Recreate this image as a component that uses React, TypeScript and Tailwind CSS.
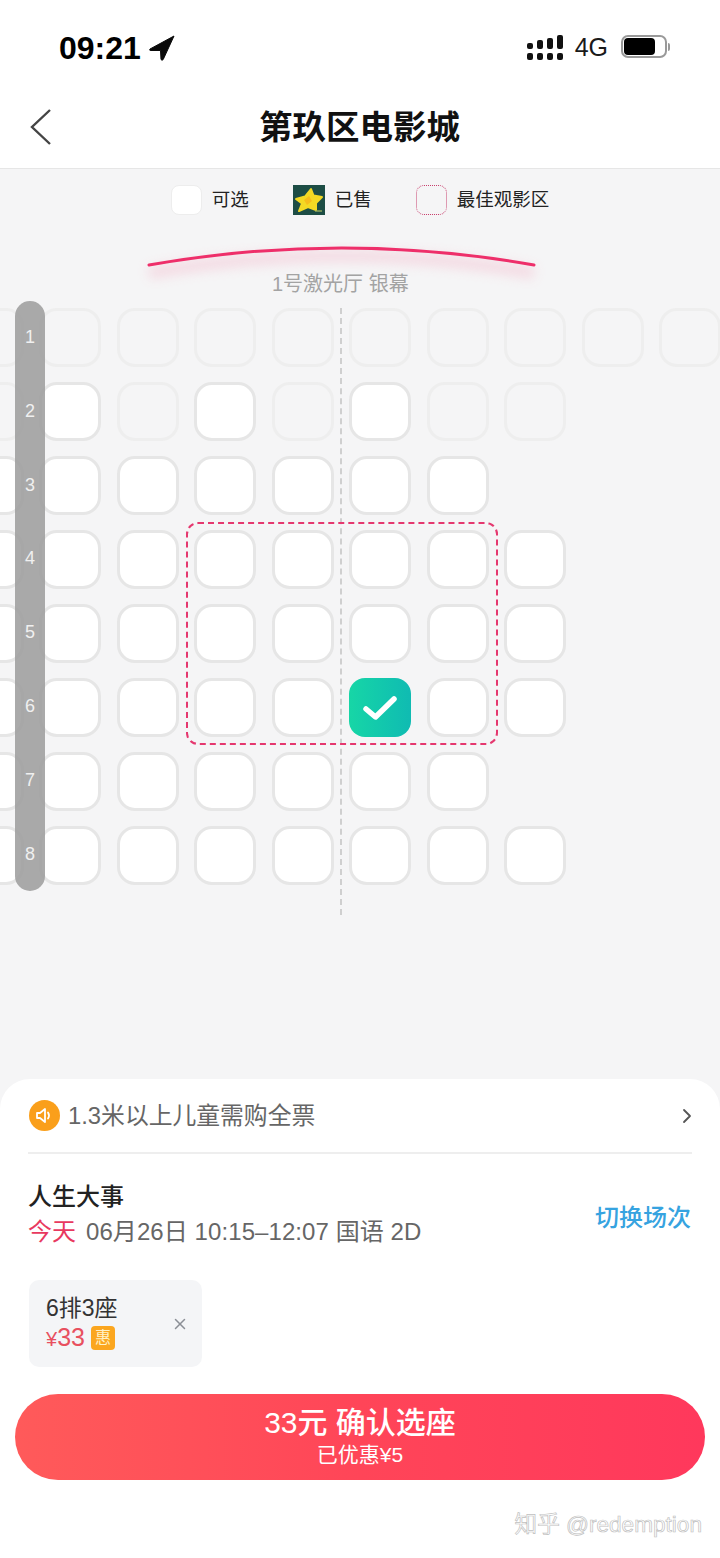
import { ChevronRight, X } from "lucide-react";

const rows = [
    "xxxxxxxxxx",
    "xaxaxaxx..",
    "aaaaaaa...",
    "aaaaaaaa..",
    "aaaaaaaa..",
    "aaaaasaa..",
    "aaaaaaa...",
    "aaaaaaaa..",
];

const Seat = ({ type }: { type: string }) => {
    if (type === ".") return <div className="h-[59px]" />;
    if (type === "s") {
        return (
            <div className="h-[59px] rounded-[16px] bg-gradient-to-r from-[#17d6a6] to-[#10bbb2] flex items-center justify-center">
                <svg width="34" height="26" viewBox="0 0 34 26" fill="none">
                    <path d="M3 14 L12.5 22 L31 4" stroke="white" strokeWidth="5.5" strokeLinecap="round" strokeLinejoin="round" />
                </svg>
            </div>
        );
    }
    if (type === "x") return <div className="h-[59px] rounded-[18px] border-[3px] border-[#eeeeee]" />;
    return <div className="h-[59px] rounded-[18px] border-[3px] border-[#e6e6e6] bg-white" />;
};

const StatusBar = () => (
    <div className="h-[96px] flex items-start justify-between pl-[59px] pr-[50px] pt-[29px] bg-white">
        <div className="flex items-center gap-[8px]">
            <span className="text-[32px] leading-[38px] font-semibold text-black">09:21</span>
            <svg width="26" height="26" viewBox="0 0 26 26">
                <path d="M25 1 L1 14 Q0 15.5 2 15.5 L11.5 15.5 L12 24.5 Q13 26 14.2 24.5 Z" fill="#0a0a0a" stroke="#0a0a0a" strokeLinejoin="round" />
            </svg>
        </div>
        <div className="flex items-center gap-[12px] pt-[5px]">
            <svg width="36" height="26" viewBox="0 0 36 26" fill="#111">
                <rect x="0" y="18" width="6" height="7" rx="2" />
                <rect x="0" y="8" width="6" height="6" rx="2" />
                <rect x="10" y="18" width="6" height="7" rx="2" />
                <rect x="10" y="5" width="6" height="9" rx="2" />
                <rect x="20" y="18" width="6" height="7" rx="2" />
                <rect x="20" y="3" width="6" height="11" rx="2" />
                <rect x="30" y="18" width="6" height="7" rx="2" />
                <rect x="30" y="0" width="6" height="14" rx="2" />
            </svg>
            <span className="text-[25px] leading-[30px] text-[#1a1a1a] mt-[-2px]">4G</span>
            <div className="flex items-center gap-[1px] ml-[1px] mt-[-3px]">
                <div className="w-[46px] h-[23px] rounded-[7px] border-2 border-[#999999] p-[1px] pr-[10px]">
                    <div className="h-full rounded-[4px] bg-black" />
                </div>
                <div className="w-[2px] h-[8px] rounded-r bg-[#999999]" />
            </div>
        </div>
    </div>
);

const Header = () => (
    <div className="h-[73px] bg-white border-b border-[#e6e6e6] relative flex items-center justify-center pb-[9px] pr-[1px]">
        <svg className="absolute left-[28px] top-[12px]" width="26" height="38" viewBox="0 0 26 38" fill="none">
            <path d="M22 2 L4 19 L22 36" stroke="#444" strokeWidth="2.4" />
        </svg>
        <span className="text-[33.5px] leading-[44px] font-bold text-[#111]">第玖区电影城</span>
    </div>
);

const Legend = () => (
    <div className="h-[62px] flex items-center justify-center gap-[44px] text-[18.5px] text-[#222] pb-[1px]">
        <div className="flex items-center gap-[10px]">
            <div className="w-[31px] h-[30px] rounded-[8px] bg-white border border-[#ededed]" />
            <span>可选</span>
        </div>
        <div className="flex items-center gap-[10px]">
            <svg width="32" height="30" viewBox="0 0 32 30">
                <rect width="32" height="30" fill="#1d4d45" />
                <path d="M18 4 L20.5 10.5 L29 12 L23 18 L23 25 L15 22 L6 26 L9 18.5 L3 14 L12 11.5 Z" fill="#f3d924" stroke="#f3d924" strokeWidth="2" strokeLinejoin="round" />
                <path d="M16 11 L19 16 L14 20 L11 15 Z" fill="#f6bd1c" />
                <path d="M22 26 L29 26" stroke="#a9bc63" strokeWidth="1.2" />
            </svg>
            <span>已售</span>
        </div>
        <div className="flex items-center gap-[10px]">
            <div className="w-[31px] h-[30px] rounded-[8px] border border-dotted border-[#c8406e]" />
            <span>最佳观影区</span>
        </div>
    </div>
);

const Screen = () => (
    <div className="relative h-[68px] flex justify-center">
        <svg className="absolute left-[130px] top-[8px]" width="424" height="50" viewBox="0 0 424 50" fill="none">
            <defs>
                <filter id="glow" x="-10%" y="-80%" width="120%" height="300%">
                    <feGaussianBlur stdDeviation="6" />
                </filter>
            </defs>
            <path d="M19 26 Q212 -8 404 26" transform="translate(0 8)" stroke="#f3b9cb" strokeWidth="12" opacity="0.45" filter="url(#glow)" />
            <path d="M19 26 Q212 -8 404 26" stroke="#ee2f6a" strokeWidth="3" strokeLinecap="round" />
        </svg>
        <span className="absolute left-[272px] top-[39px] text-[20px] leading-[28px] text-[#a3a3a3]">1号激光厅 银幕</span>
    </div>
);

const SeatMap = () => (
    <div className="relative flex-1 overflow-hidden">
        <div className="grid grid-cols-[repeat(10,62px)] gap-x-[15.5px] gap-y-[15px] ml-[-38.5px] pt-[9px] w-[800px]">
            {rows.map((row, r) =>
                row.split("").map((type, c) => <Seat key={`${r}-${c}`} type={type} />)
            )}
        </div>
        {/* center line */}
        <div className="absolute left-[340px] top-[9px] h-[607px] border-l-2 border-dashed border-[#cfcfcf]" />
        {/* best viewing area */}
        <div className="absolute left-[186px] top-[223px] w-[312px] h-[223px] rounded-[12px] border-2 border-dashed border-[#e5386f]" />
        {/* row numbers */}
        <div className="absolute left-[15px] top-[2px] w-[30px] h-[590px] rounded-[15px] bg-[#9b9b9b]/85 flex flex-col items-center pt-[7px] text-[18px] text-[#f0f0f0]">
            {rows.map((_, i) => (
                <span key={i} className="h-[73.8px] shrink-0 leading-[58px]">{i + 1}</span>
            ))}
        </div>
    </div>
);

const BottomSheet = () => (
    <div className="h-[479px] bg-white rounded-t-[30px] flex flex-col">
        <div className="h-[75px] mx-[28px] border-b-2 border-[#eeeeee] flex items-center justify-between">
            <div className="flex items-center gap-[8px] ml-[1px]">
                <div className="w-[31px] h-[31px] rounded-full bg-[#fa9f1b] flex items-center justify-center">
                    <svg width="19" height="19" viewBox="0 0 19 19" fill="none" stroke="white" strokeWidth="1.8" strokeLinejoin="round" strokeLinecap="round">
                        <path d="M2 7 H5 L10 3 V16 L5 12 H2 Z" />
                        <path d="M13 6.5 Q15 9.5 13 12.5" />
                    </svg>
                </div>
                <span className="text-[23.8px] leading-[32px] text-[#666]">1.3米以上儿童需购全票</span>
            </div>
            <ChevronRight size={24} strokeWidth={1.8} className="text-[#555] mr-[-7px]" />
        </div>
        <div className="mx-[28px] mt-[26px] flex items-center justify-between">
            <div>
                <div className="text-[24px] leading-[34px] font-medium text-[#222]">人生大事</div>
                <div className="text-[24px] leading-[36px] text-[#666] flex gap-[10px]">
                    <span className="text-[#e8395f]">今天</span>
                    <span className="tracking-[0.08px]">06月26日 10:15–12:07 国语 2D</span>
                </div>
            </div>
            <span className="text-[24px] leading-[34px] font-medium text-[#36a3e0] mt-[5px] mr-[1px]">切换场次</span>
        </div>
        <div className="mx-[29px] mt-[30px] w-[173px] h-[87px] rounded-[10px] bg-[#f4f5f7] flex items-center justify-between pl-[17px] pr-[13px]">
            <div>
                <div className="text-[23px] leading-[28px] text-[#333]">6排3座</div>
                <div className="flex items-center gap-[6px]">
                    <span className="text-[25px] leading-[30px] text-[#e8505f]"><span className="text-[20px]">¥</span>33</span>
                    <span className="w-[24px] h-[24px] rounded-[4px] bg-[#fba61f] text-[16px] leading-[24px] text-center text-[#fff1c4]">惠</span>
                </div>
            </div>
            <X size={18} strokeWidth={2} className="text-[#8b8f96]" />
        </div>
        <div className="mx-[15px] mt-[27px] h-[86px] rounded-full bg-gradient-to-r from-[#ff5a5a] via-[#ff4558] to-[#ff385c] flex flex-col items-center justify-center text-white">
            <div className="text-[30px] leading-[36px] font-medium">33元 确认选座</div>
            <div className="text-[21px] leading-[28px]">已优惠¥5</div>
        </div>
        <div className="mt-[30px] pr-[18px] text-right text-[22.6px] leading-[30px] text-white [-webkit-text-stroke:0.7px_#c0c0c0]">知乎 @redemption</div>
    </div>
);

export default function App() {
    return (
        <div className="w-[720px] h-[1558px] flex flex-col bg-[#f5f5f6] overflow-hidden font-['Liberation_Sans','Noto_Sans_CJK_SC',sans-serif]">
            <StatusBar />
            <Header />
            <Legend />
            <Screen />
            <SeatMap />
            <BottomSheet />
        </div>
    );
}
